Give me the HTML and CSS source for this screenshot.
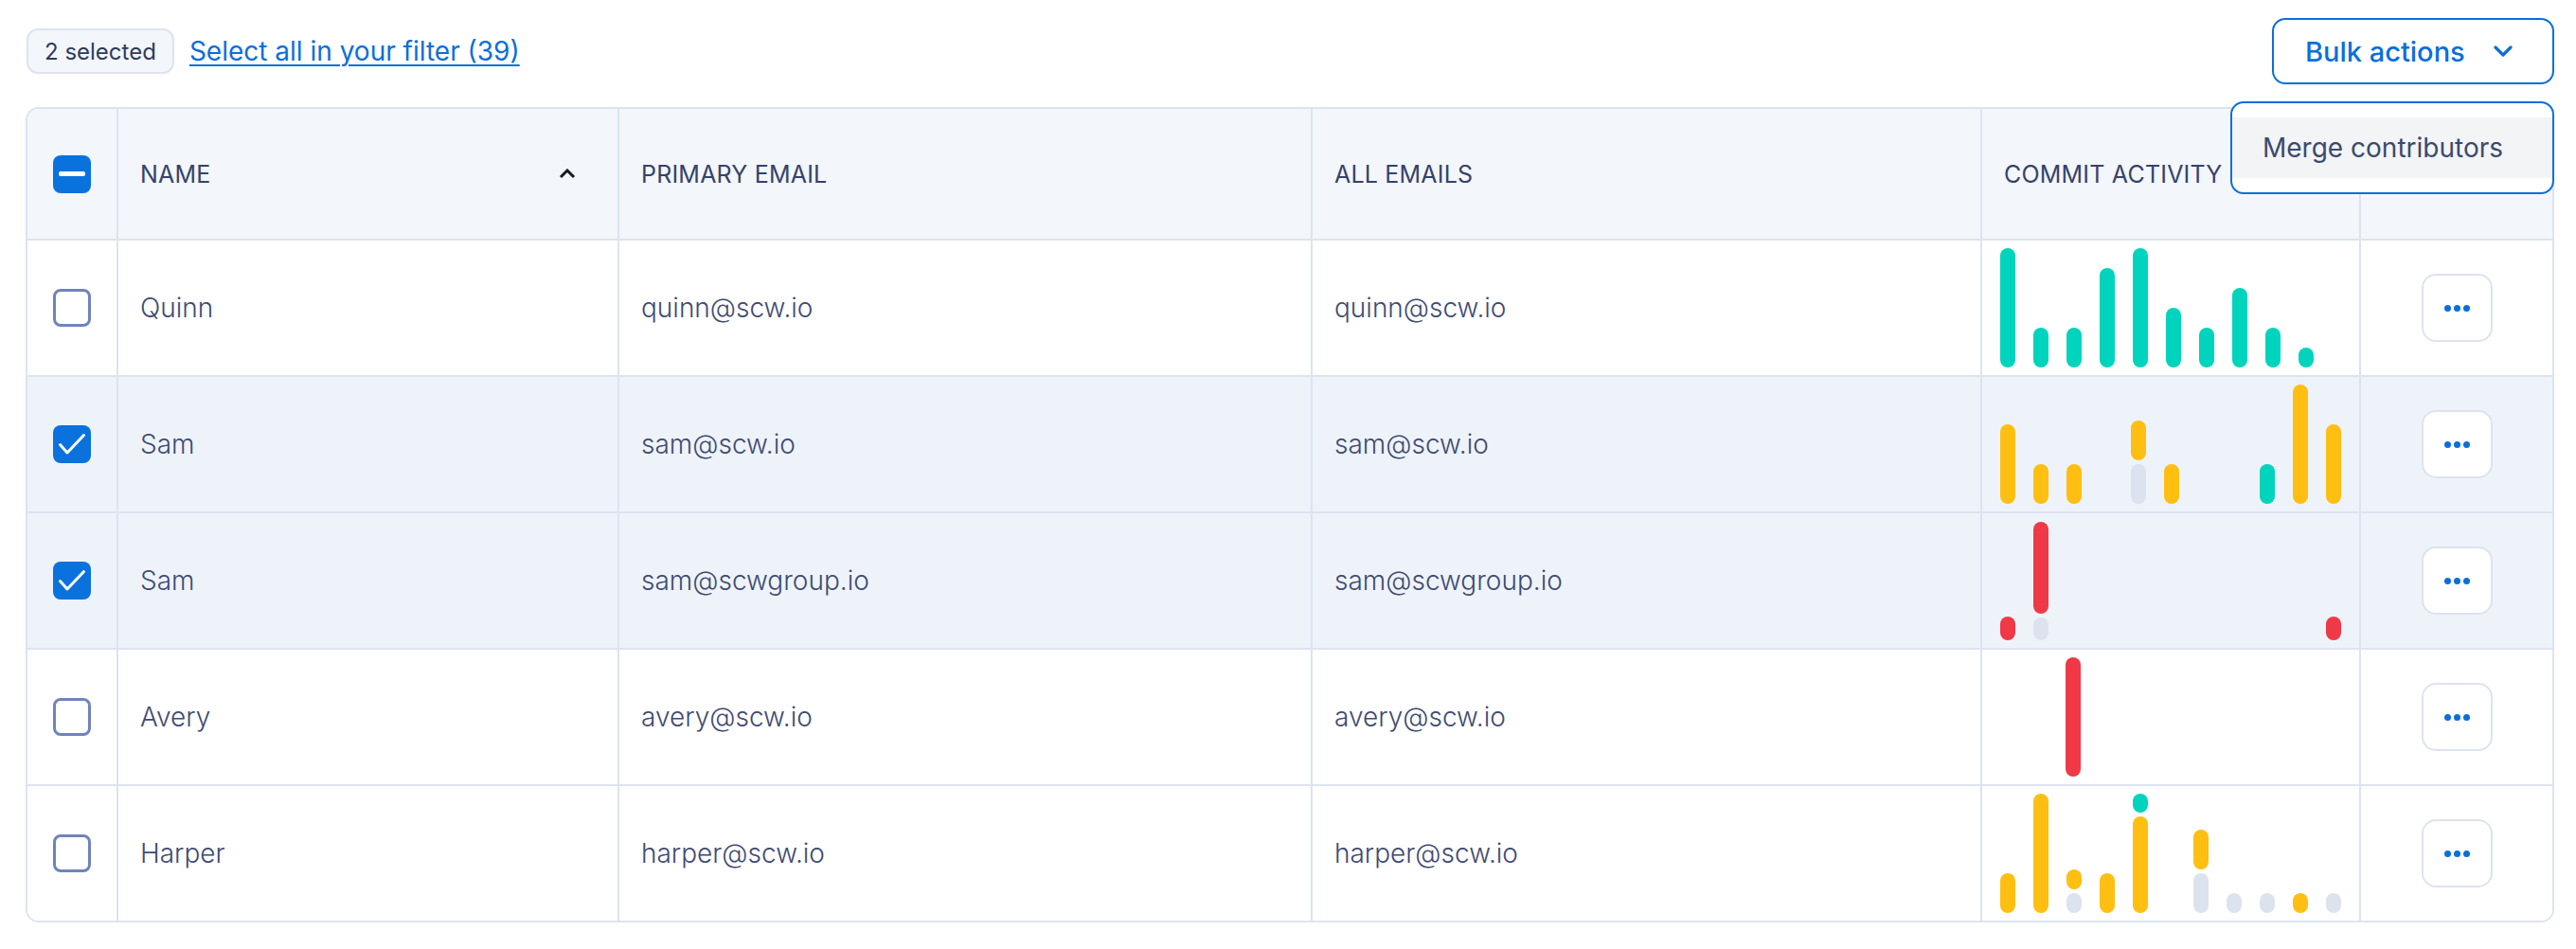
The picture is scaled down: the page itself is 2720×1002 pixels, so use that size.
FILE: index.html
```html
<!DOCTYPE html>
<html lang="en">
<head>
<meta charset="utf-8">
<title>Contributors</title>
<link rel="stylesheet" href="styles.css">
</head>
<body>
<div class="page">
  <div class="toolbar">
    <div class="selection">
      <span class="badge">2 selected</span>
      <a class="select-all" href="#">Select all in your filter (39)</a>
    </div>
    <div class="bulk">
      <button class="bulk-btn" type="button">
        <span>Bulk actions</span>
        <svg class="chev" width="20" height="12" viewBox="0 0 20 12"><path d="M2 2 L10 10 L18 2" fill="none" stroke="#0a6fdb" stroke-width="3.2" stroke-linecap="round" stroke-linejoin="round"/></svg>
      </button>
      <div class="menu">
        <div class="menu-item">Merge contributors</div>
      </div>
    </div>
  </div>

  <div class="table">
    <div class="row head">
      <div class="cell check"><span class="cb indeterminate"><span class="dash"></span></span></div>
      <div class="cell name-head"><span>NAME</span>
        <svg class="caret" width="18" height="11" viewBox="0 0 18 11"><path d="M2 9 L9 2 L16 9" fill="none" stroke="#161a25" stroke-width="3" stroke-linejoin="miter"/></svg>
      </div>
      <div class="cell">PRIMARY EMAIL</div>
      <div class="cell">ALL EMAILS</div>
      <div class="cell">COMMIT ACTIVITY</div>
      <div class="cell"></div>
    </div>

    <div class="row">
      <div class="cell check"><span class="cb"></span></div>
      <div class="cell">Quinn</div>
      <div class="cell">quinn@scw.io</div>
      <div class="cell">quinn@scw.io</div>
      <div class="cell chart">
        <div class="slot"><i class="bar teal" style="height:126px"></i></div>
        <div class="slot"><i class="bar teal" style="height:42px"></i></div>
        <div class="slot"><i class="bar teal" style="height:42px"></i></div>
        <div class="slot"><i class="bar teal" style="height:105px"></i></div>
        <div class="slot"><i class="bar teal" style="height:126px"></i></div>
        <div class="slot"><i class="bar teal" style="height:63px"></i></div>
        <div class="slot"><i class="bar teal" style="height:42px"></i></div>
        <div class="slot"><i class="bar teal" style="height:84px"></i></div>
        <div class="slot"><i class="bar teal" style="height:42px"></i></div>
        <div class="slot"><i class="bar teal" style="height:21px"></i></div>
        <div class="slot"></div>
      </div>
      <div class="cell actions"><button class="more" type="button"><i></i><i></i><i></i></button></div>
    </div>

    <div class="row selected">
      <div class="cell check"><span class="cb checked"><svg width="30" height="24" viewBox="0 0 30 24"><path d="M2.5 12.5 L10 21 L27.5 2.5" fill="none" stroke="#fff" stroke-width="3" stroke-linecap="round" stroke-linejoin="round"/></svg></span></div>
      <div class="cell">Sam</div>
      <div class="cell">sam@scw.io</div>
      <div class="cell">sam@scw.io</div>
      <div class="cell chart">
        <div class="slot"><i class="bar yellow" style="height:84px"></i></div>
        <div class="slot"><i class="bar yellow" style="height:42px"></i></div>
        <div class="slot"><i class="bar yellow" style="height:42px"></i></div>
        <div class="slot"></div>
        <div class="slot"><i class="bar yellow" style="height:42px"></i><i class="bar gray" style="height:42px"></i></div>
        <div class="slot"><i class="bar yellow" style="height:42px"></i></div>
        <div class="slot"></div>
        <div class="slot"></div>
        <div class="slot"><i class="bar teal" style="height:42px"></i></div>
        <div class="slot"><i class="bar yellow" style="height:126px"></i></div>
        <div class="slot"><i class="bar yellow" style="height:84px"></i></div>
      </div>
      <div class="cell actions"><button class="more" type="button"><i></i><i></i><i></i></button></div>
    </div>

    <div class="row selected">
      <div class="cell check"><span class="cb checked"><svg width="30" height="24" viewBox="0 0 30 24"><path d="M2.5 12.5 L10 21 L27.5 2.5" fill="none" stroke="#fff" stroke-width="3" stroke-linecap="round" stroke-linejoin="round"/></svg></span></div>
      <div class="cell">Sam</div>
      <div class="cell">sam@scwgroup.io</div>
      <div class="cell">sam@scwgroup.io</div>
      <div class="cell chart">
        <div class="slot"><i class="bar red" style="height:25px"></i></div>
        <div class="slot"><i class="bar red" style="height:97px"></i><i class="bar gray" style="height:24px"></i></div>
        <div class="slot"></div>
        <div class="slot"></div>
        <div class="slot"></div>
        <div class="slot"></div>
        <div class="slot"></div>
        <div class="slot"></div>
        <div class="slot"></div>
        <div class="slot"></div>
        <div class="slot"><i class="bar red" style="height:25px"></i></div>
      </div>
      <div class="cell actions"><button class="more" type="button"><i></i><i></i><i></i></button></div>
    </div>

    <div class="row">
      <div class="cell check"><span class="cb"></span></div>
      <div class="cell">Avery</div>
      <div class="cell">avery@scw.io</div>
      <div class="cell">avery@scw.io</div>
      <div class="cell chart">
        <div class="slot"></div>
        <div class="slot"></div>
        <div class="slot"><i class="bar red" style="height:126px"></i></div>
        <div class="slot"></div>
        <div class="slot"></div>
        <div class="slot"></div>
        <div class="slot"></div>
        <div class="slot"></div>
        <div class="slot"></div>
        <div class="slot"></div>
        <div class="slot"></div>
      </div>
      <div class="cell actions"><button class="more" type="button"><i></i><i></i><i></i></button></div>
    </div>

    <div class="row">
      <div class="cell check"><span class="cb"></span></div>
      <div class="cell">Harper</div>
      <div class="cell">harper@scw.io</div>
      <div class="cell">harper@scw.io</div>
      <div class="cell chart">
        <div class="slot"><i class="bar yellow" style="height:42px"></i></div>
        <div class="slot"><i class="bar yellow" style="height:126px"></i></div>
        <div class="slot"><i class="bar yellow" style="height:21px"></i><i class="bar gray" style="height:21px"></i></div>
        <div class="slot"><i class="bar yellow" style="height:42px"></i></div>
        <div class="slot"><i class="bar teal" style="height:20px"></i><i class="bar yellow" style="height:102px"></i></div>
        <div class="slot"></div>
        <div class="slot"><i class="bar yellow" style="height:42px"></i><i class="bar gray" style="height:42px"></i></div>
        <div class="slot"><i class="bar gray" style="height:21px"></i></div>
        <div class="slot"><i class="bar gray" style="height:21px"></i></div>
        <div class="slot"><i class="bar yellow" style="height:21px"></i></div>
        <div class="slot"><i class="bar gray" style="height:21px"></i></div>
      </div>
      <div class="cell actions"><button class="more" type="button"><i></i><i></i><i></i></button></div>
    </div>
  </div>
</div>
</body>
</html>
```

FILE: styles.css
```css
* { box-sizing: border-box; }

html, body {
  margin: 0;
  padding: 0;
  background: #ffffff;
}

body {
  font-family: Inter, "Noto Sans", "Liberation Sans", sans-serif;
  color: #45517a;
}

.page {
  padding: 19px 23px 0 27px;
}

.toolbar {
  display: flex;
  align-items: center;
  justify-content: space-between;
  height: 70px;
}

.selection {
  display: flex;
  align-items: center;
  gap: 16px;
  padding-left: 1px;
}

.badge {
  display: inline-flex;
  align-items: center;
  height: 48px;
  padding: 0 17px;
  background: #f3f6fa;
  border: 2px solid #dde3ef;
  border-radius: 12px;
  font-size: 24px;
  color: #2f3b5c;
}

.select-all {
  font-size: 28px;
  color: #0a6fdb;
  text-decoration: underline;
  text-decoration-thickness: 2px;
  text-underline-offset: 4px;
}

.bulk {
  position: relative;
}

.bulk-btn {
  display: flex;
  align-items: center;
  gap: 30px;
  width: 298px;
  height: 70px;
  padding: 0 42px 0 33px;
  background: #ffffff;
  border: 2px solid #0a6fdb;
  border-radius: 14px;
  font-family: inherit;
  font-size: 29px;
  font-weight: 500;
  color: #0a6fdb;
}

.chev { flex: none; }

.menu {
  position: absolute;
  top: calc(100% + 18px);
  right: 0;
  width: 342px;
  padding: 15px 0;
  background: #ffffff;
  border: 2px solid #0a6fdb;
  border-radius: 14px;
  z-index: 5;
}

.menu-item {
  display: flex;
  align-items: center;
  height: 64px;
  padding-left: 32px;
  background: #f3f4f6;
  font-size: 28px;
  color: #3b4a6e;
}

.table {
  margin-top: 24px;
  width: 2670px;
  border: 2px solid #dde3ef;
  border-radius: 14px;
  overflow: hidden;
}

.row {
  display: grid;
  grid-template-columns: 94px 529px 732px 707px 400px 204px;
  height: 144px;
  border-top: 2px solid #dde3ef;
  background: #ffffff;
}

.row.head {
  height: 137px;
  border-top: none;
  background: #f3f6fa;
}

.row.selected {
  background: #eef3fa;
}

.cell {
  display: flex;
  align-items: center;
  padding: 0 23px;
  border-left: 2px solid #dde3ef;
  font-size: 28px;
  font-weight: 300;
  color: #3f4b74;
  white-space: nowrap;
  overflow: hidden;
}

.row.head .cell {
  font-size: 25px;
  font-weight: 400;
  color: #35436b;
  letter-spacing: 0.2px;
}

.cell.check {
  border-left: none;
  justify-content: center;
  padding: 0;
}

.name-head {
  justify-content: space-between;
  padding-right: 44px !important;
}

.caret { flex: none; }

.cb {
  display: flex;
  align-items: center;
  justify-content: center;
  width: 40px;
  height: 40px;
  border-radius: 8px;
  border: 3px solid #7084bc;
  background: #ffffff;
}

.cb.checked,
.cb.indeterminate {
  border: none;
  background: #0a72dd;
}

.dash {
  width: 28px;
  height: 5px;
  border-radius: 2px;
  background: #ffffff;
}

.cell.chart {
  align-items: flex-end;
  padding: 0 0 8px 19px;
}

.slot {
  display: flex;
  flex-direction: column;
  justify-content: flex-end;
  gap: 4px;
  width: 16px;
  margin-right: 19px;
  height: 126px;
}

.bar {
  display: block;
  width: 16px;
  border-radius: 8px;
}

.teal { background: #00d4bc; }
.yellow { background: #ffbf12; }
.red { background: #ef3946; }
.gray { background: #dde2ef; }

.cell.actions {
  justify-content: center;
  padding: 0;
}

.more {
  display: flex;
  align-items: center;
  justify-content: center;
  gap: 3px;
  width: 75px;
  height: 72px;
  padding: 0;
  background: #ffffff;
  border: 2px solid #dde3ef;
  border-radius: 15px;
}

.more i {
  display: block;
  width: 7px;
  height: 7px;
  border-radius: 50%;
  background: #0a6fdb;
}
```
